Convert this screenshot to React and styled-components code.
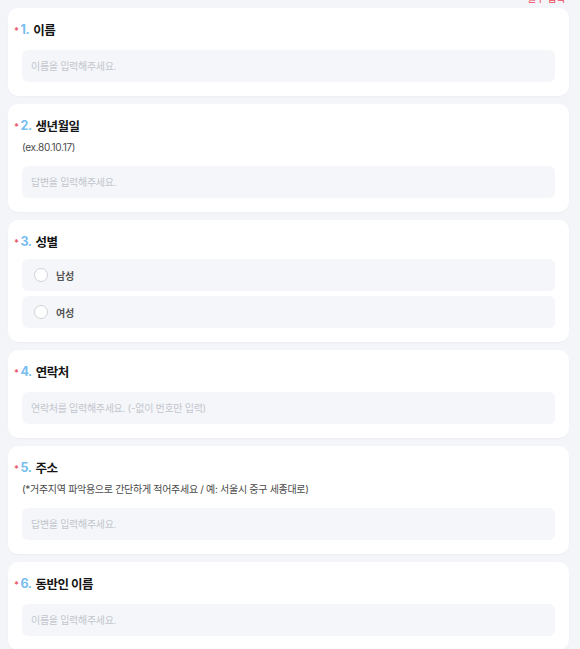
import React from "react";
import styled, { createGlobalStyle } from "styled-components";

const GlobalStyle = createGlobalStyle`
  html, body {
    margin: 0;
    padding: 0;
    background: #f4f5f9;
    font-family: Inter, "Noto Sans CJK KR", "Noto Sans", sans-serif;
  }
`;

const questions = [
  { no: 1, title: "이름", placeholder: "이름을 입력해주세요." },
  { no: 2, title: "생년월일", desc: "(ex.80.10.17)", placeholder: "답변을 입력해주세요." },
  { no: 3, title: "성별", options: ["남성", "여성"] },
  { no: 4, title: "연락처", placeholder: "연락처를 입력해주세요. (-없이 번호만 입력)" },
  {
    no: 5,
    title: "주소",
    desc: "(*거주지역 파악용으로 간단하게 적어주세요 / 예: 서울시 중구 세종대로)",
    placeholder: "답변을 입력해주세요.",
  },
  { no: 6, title: "동반인 이름", placeholder: "이름을 입력해주세요." },
];

const App = () => {
  return (
    <Page>
      <GlobalStyle />
      <Required>* 필수 입력</Required>
      {questions.map((q) => (
        <Card key={q.no}>
          <Title>
            <Star>*</Star>
            <Num>{q.no}.</Num>
            {q.title}
          </Title>
          {q.desc && <Desc>{q.desc}</Desc>}
          {q.options ? (
            <Options>
              {q.options.map((opt) => (
                <Option key={opt}>
                  <Radio />
                  {opt}
                </Option>
              ))}
            </Options>
          ) : (
            <Input placeholder={q.placeholder} />
          )}
        </Card>
      ))}
    </Page>
  );
};

const Page = styled.div`
  display: flex;
  flex-direction: column;
  gap: 8px;
  padding: 0 11px 20px 8px;
`;

const Required = styled.div`
  margin-top: -8px;
  margin-bottom: -4px;
  height: 12px;
  line-height: 12px;
  font-size: 10px;
  letter-spacing: -0.3px;
  color: #f0485a;
  text-align: right;
  padding-right: 4px;
`;

const Card = styled.div`
  background: #fff;
  border-radius: 10px;
  padding: 11px 14px 14px 14px;
  box-shadow: 0 1px 2px rgba(0, 0, 0, 0.03);
`;

const Title = styled.div`
  display: flex;
  align-items: center;
  margin-left: -8px;
  height: 20px;
  font-size: 12.5px;
  letter-spacing: -0.5px;
  font-weight: 700;
  color: #151515;
`;

const Star = styled.span`
  font-size: 9px;
  color: #e85a6a;
  margin-right: 2px;
  margin-top: 2px;
`;

const Num = styled.span`
  color: #78bdf0;
  margin-right: 4px;
`;

const Desc = styled.div`
  margin-top: 4px;
  font-size: 10px;
  letter-spacing: -0.3px;
  color: #4a4a4a;
  line-height: 16px;
`;

const Input = styled.input`
  display: block;
  box-sizing: border-box;
  width: 100%;
  height: 32px;
  margin-top: 11px;
  border: none;
  outline: none;
  border-radius: 6px;
  background: #f5f6fa;
  padding: 0 9px;
  font-family: inherit;
  font-size: 10px;
  letter-spacing: -0.3px;
  color: #333;
  &::placeholder {
    color: #c3c6cd;
  }
`;

const Options = styled.div`
  display: flex;
  flex-direction: column;
  gap: 5px;
  margin-top: 8px;
`;

const Option = styled.div`
  display: flex;
  align-items: center;
  gap: 8px;
  height: 32px;
  padding: 0 12px;
  border-radius: 6px;
  background: #f5f6fa;
  font-size: 10px;
  letter-spacing: -0.3px;
  font-weight: 700;
  color: #555;
`;

const Radio = styled.span`
  box-sizing: border-box;
  width: 14px;
  height: 14px;
  border-radius: 50%;
  border: 1px solid #cfd2d8;
  background: #fff;
`;

export default App;
